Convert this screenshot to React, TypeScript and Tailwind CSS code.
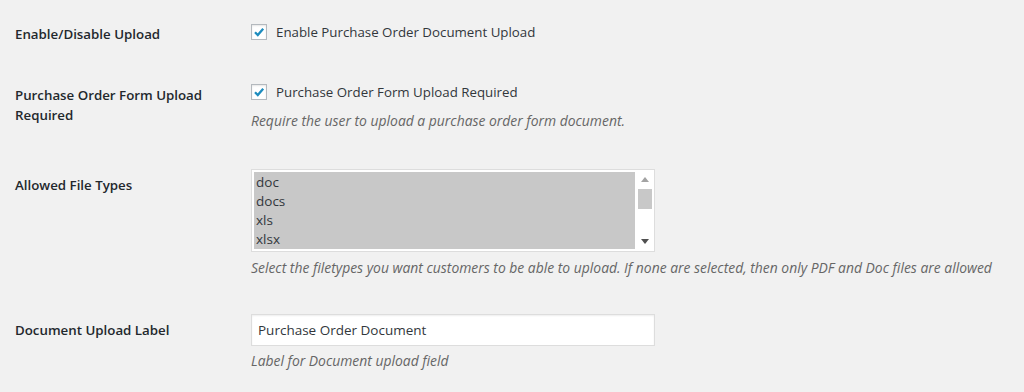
import React from "react";

const Check = () => (
  <span className="w-4 h-4 bg-white border border-[#b4b9be] shadow-[inset_0_1px_2px_rgba(0,0,0,0.1)] flex items-center justify-center shrink-0">
    <svg width="12" height="12" viewBox="0 0 12 12">
      <path d="M2 6.2 L4.8 9 L10.2 2.8" fill="none" stroke="#1e8cbe" strokeWidth="2.3" />
    </svg>
  </span>
);

const Label: React.FC<{ text: React.ReactNode; mt: string }> = ({ text, mt }) => (
  <div className={`w-[251px] pl-[15px] shrink-0 font-semibold text-[#23282d] text-[13.3px] leading-5 ${mt}`}>
    {text}
  </div>
);

const Desc: React.FC<{ text: string; mt: string }> = ({ text, mt }) => (
  <p className={`italic text-[#666] text-[13.9px] leading-5 whitespace-nowrap ${mt}`}>{text}</p>
);

const App: React.FC = () => {
  const fileTypes = ["doc", "docs", "xls", "xlsx"];

  return (
    <div
      className="w-[1024px] h-[392px] bg-[#f1f1f1] text-[#32373c] flex flex-col overflow-hidden"
      style={{ fontFamily: '"Open Sans", "Noto Sans", sans-serif' }}
    >
      {/* Enable / Disable */}
      <div className="flex h-4 mt-[24px]">
        <Label text="Enable/Disable Upload" mt="mt-[0px]" />
        <label className="flex items-center gap-[9px] text-[13.3px] leading-4">
          <Check />
          Enable Purchase Order Document Upload
        </label>
      </div>

      {/* Upload required */}
      <div className="flex mt-[44px]">
        <Label text={<>Purchase Order Form Upload<br />Required</>} mt="mt-[1px]" />
        <div className="flex flex-col">
          <label className="flex items-center gap-[9px] text-[13.3px] leading-4">
            <Check />
            Purchase Order Form Upload Required
          </label>
          <Desc text="Require the user to upload a purchase order form document." mt="mt-[11px]" />
        </div>
      </div>

      {/* Allowed file types */}
      <div className="flex mt-[38px]">
        <Label text="Allowed File Types" mt="mt-[6px]" />
        <div className="flex flex-col">
          <div className="w-[404px] h-[83px] bg-white border border-[#ddd] flex p-[2px]">
            <div className="flex-1 bg-[#c8c8c8] pt-[1px] pl-[2px] text-[13.5px] leading-[19px] text-[#32373c]">
              {fileTypes.map((t) => (
                <div key={t}>{t}</div>
              ))}
            </div>
            <div className="w-[17px] flex flex-col items-center pl-[2px]">
              <svg width="8" height="5" viewBox="0 0 8 5" className="mt-[5px]">
                <path d="M0 5 L4 0 L8 5 Z" fill="#a3a3a3" />
              </svg>
              <div className="w-[14px] h-[20px] bg-[#c8c8c8] mt-[7px]" />
              <div className="flex-1" />
              <svg width="8" height="5" viewBox="0 0 8 5" className="mb-[5px]">
                <path d="M0 0 L8 0 L4 5 Z" fill="#505050" />
              </svg>
            </div>
          </div>
          <Desc
            text="Select the filetypes you want customers to be able to upload. If none are selected, then only PDF and Doc files are allowed"
            mt="mt-[6px]"
          />
        </div>
      </div>

      {/* Label */}
      <div className="flex mt-[36px]">
        <Label text="Document Upload Label" mt="mt-[6px]" />
        <div className="flex flex-col">
          <div className="w-[404px] h-[32px] bg-white border border-[#ddd] shadow-[inset_0_1px_2px_rgba(0,0,0,0.07)] flex items-center px-[6px] text-[13.5px] text-[#32373c]">
            Purchase Order Document
          </div>
          <Desc text="Label for Document upload field" mt="mt-[5px]" />
        </div>
      </div>
    </div>
  );
};

export default App;
